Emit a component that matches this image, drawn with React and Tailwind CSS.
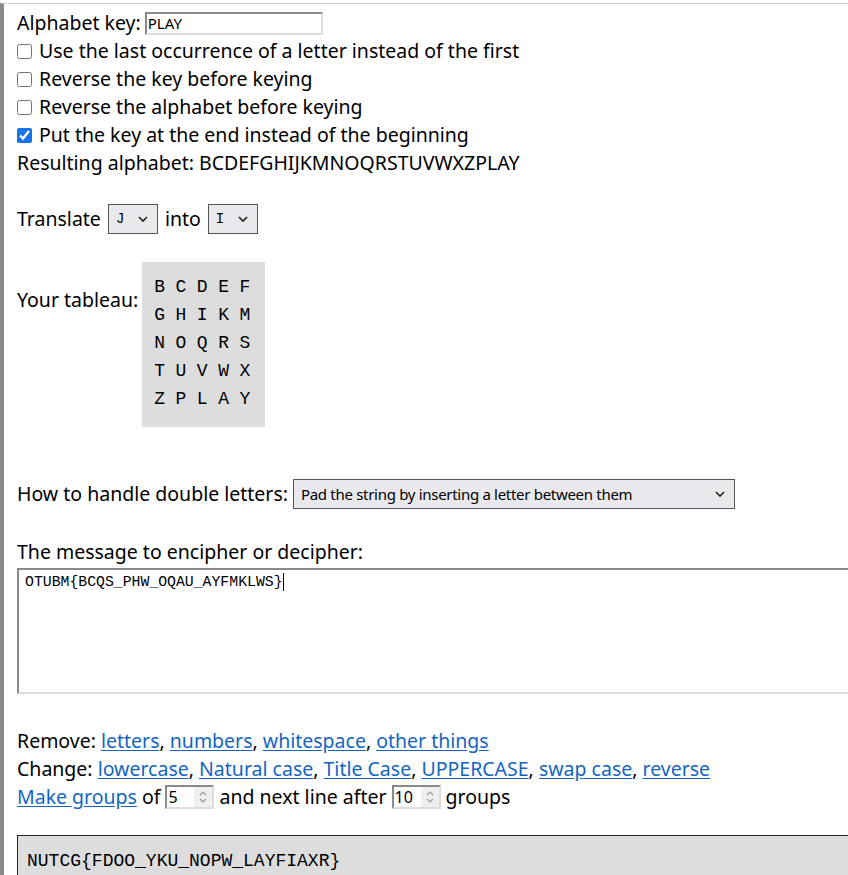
import React from 'react';

const tableau = [
  ['B', 'C', 'D', 'E', 'F'],
  ['G', 'H', 'I', 'K', 'M'],
  ['N', 'O', 'Q', 'R', 'S'],
  ['T', 'U', 'V', 'W', 'X'],
  ['Z', 'P', 'L', 'A', 'Y'],
];

const Check = ({ checked, children }) => (
  <label className="flex items-center h-[28px]">
    <input type="checkbox" defaultChecked={checked} className="w-[15px] h-[15px] m-0 mr-[7px] accent-[#1a73e8]" />
    {children}
  </label>
);

const Link = ({ children }) => (
  <a href="#" className="text-[#1565c0] underline underline-offset-2">{children}</a>
);

const Spinner = ({ value }) => (
  <span className="inline-flex items-center w-[49px] h-[24px] border-2 border-[#8a8a8a] border-r-[#ddd] border-b-[#ddd] bg-white mx-[5px]">
    <span className="flex-1 pl-[1px] text-[16px] leading-none">{value}</span>
    <span className="w-[18px] h-full bg-[#efefef] flex items-center justify-center">
      <svg width="10" height="16" viewBox="0 0 10 16">
        <path d="M2 6 L5 3 L8 6 M2 10 L5 13 L8 10" fill="none" stroke="#999" strokeWidth="1.2" />
      </svg>
    </span>
  </span>
);

const Select = ({ value, w, mono }) => (
  <span
    className={`inline-flex items-center justify-between h-[30px] border border-[#555] bg-[#e9e9ed] px-[7px] ${w} ${mono ? 'font-["Liberation_Mono",monospace] text-[14px]' : 'text-[15px] tracking-[-0.3px]'}`}
  >
    <span>{value}</span>
    <svg width="12" height="8" viewBox="0 0 12 8" className="mr-[1px]">
      <path d="M2 2 L6 6 L10 2" fill="none" stroke="#222" strokeWidth="1.6" />
    </svg>
  </span>
);

export default function App() {
  return (
    <div className="h-[875px] overflow-hidden bg-white pt-[3px]">
      <div className="border-t border-[#d0d0d0] border-l-4 border-l-[#8a8a8a] h-full pl-[13px] pt-[5px] text-[19.5px] text-black font-['Noto_Sans','Open_Sans',sans-serif] leading-[28px]">
        <div className="flex items-center h-[28px]">
          <span>Alphabet key:</span>
          <input
            defaultValue="PLAY"
            className="ml-[4px] w-[178px] h-[23px] border-2 border-[#8a8a8a] border-r-[#ddd] border-b-[#ddd] px-[1px] text-[15px] leading-none outline-none"
          />
        </div>
        <Check>Use the last occurrence of a letter instead of the first</Check>
        <Check>Reverse the key before keying</Check>
        <Check>Reverse the alphabet before keying</Check>
        <Check checked>Put the key at the end instead of the beginning</Check>
        <div>Resulting alphabet: BCDEFGHIJKMNOQRSTUVWXZPLAY</div>

        <div className="flex items-center gap-[6px] mt-[28px] h-[28px]">
          <span className="mr-[1px]">Translate</span>
          <Select value="J" w="w-[50px]" mono />
          <span className="mx-[1px]">into</span>
          <Select value="I" w="w-[50px]" mono />
        </div>

        <div className="flex items-start mt-[29px]">
          <span className="mt-[24px] mr-[4px]">Your tableau:</span>
          <div className="bg-[#dddddd] w-[123px] h-[165px] pt-[11px] pl-[12px] font-['Liberation_Mono',monospace] text-[18px] leading-[28px]">
            {tableau.map((row, i) => (
              <div key={i} className="flex gap-[10.5px]">
                {row.map((c) => (
                  <span key={c} className="w-[10.8px] text-center">{c}</span>
                ))}
              </div>
            ))}
          </div>
        </div>

        <div className="flex items-center gap-[6px] mt-[53px] h-[28px]">
          <span className="mr-[-1px]">How to handle double letters:</span>
          <Select value="Pad the string by inserting a letter between them" w="w-[442px]" />
        </div>

        <div className="mt-[30px]">The message to encipher or decipher:</div>
        <div className="w-[900px] h-[126px] border-2 border-[#8a8a8a] border-r-[#ddd] border-b-[#ddd] px-[6px] pt-[2px] font-['Liberation_Mono',monospace] text-[14.8px] leading-[20px] mt-[2px]">
          OTUBM{'{'}BCQS_PHW_OQAU_AYFMKLWS{'}'}<span className="inline-block w-px h-[18px] bg-black align-middle" />
        </div>

        <div className="mt-[33px]">
          Remove: <Link>letters</Link>, <Link>numbers</Link>, <Link>whitespace</Link>, <Link>other things</Link>
        </div>
        <div>
          Change: <Link>lowercase</Link>, <Link>Natural case</Link>, <Link>Title Case</Link>, <Link>UPPERCASE</Link>,{' '}
          <Link>swap case</Link>, <Link>reverse</Link>
        </div>
        <div className="flex items-center h-[28px]">
          <Link>Make groups</Link>
          <span className="ml-[5px]">of</span>
          <Spinner value="5" />
          <span>and next line after</span>
          <Spinner value="10" />
          <span>groups</span>
        </div>

        <div className="mt-[24px] w-[900px] h-[80px] bg-[#dddddd] border border-[#222] px-[9px] pt-[12px] font-['Liberation_Mono',monospace] text-[18px] leading-[26px]">
          NUTCG{'{'}FDOO_YKU_NOPW_LAYFIAXR{'}'}
        </div>
      </div>
    </div>
  );
}
